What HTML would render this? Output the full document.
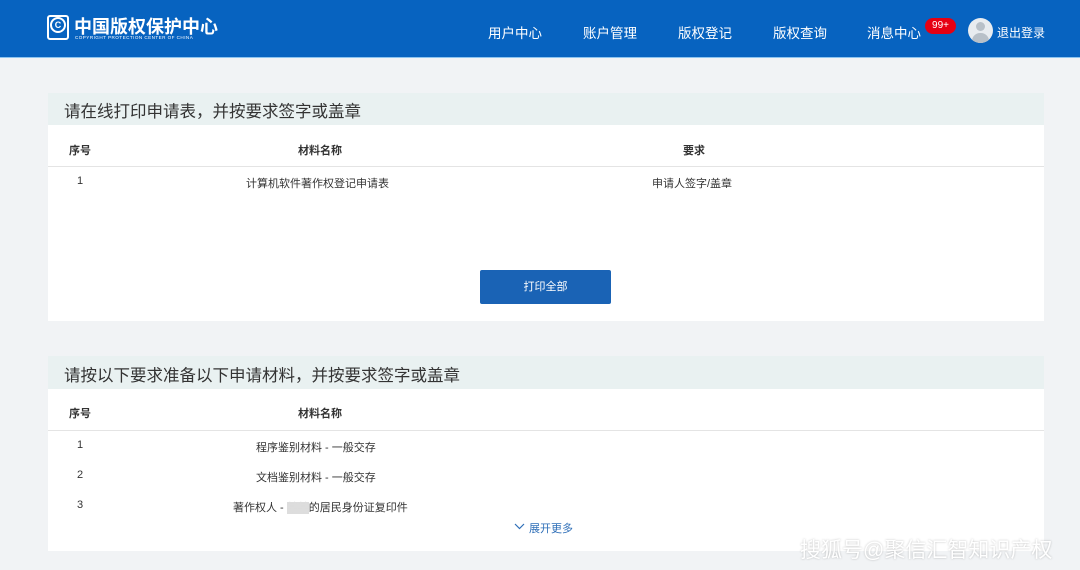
<!DOCTYPE html>
<html><head><meta charset="utf-8"><style>
*{margin:0;padding:0;box-sizing:border-box}
body{width:1080px;height:570px;overflow:hidden;background:#f1f3f5;font-family:"Liberation Sans","Noto Sans CJK SC",sans-serif;color:#333;position:relative}
.hdr{position:absolute;left:0;top:0;width:1080px;height:58px;background:#0763c0;border-bottom:1px solid #8cc4f0}
.abs{position:absolute;white-space:nowrap}
.nav{color:#fff;font-size:13.5px;top:22px}
.card{position:absolute;left:48px;width:996px;background:#fff}
.ttl{position:absolute;left:0;top:0;width:100%;height:32px;background:#e9f1f1;font-size:16.5px;color:#333;padding:5px 0 0 16px}
.t{font-size:11px;color:#333}
.b{font-weight:bold}
.line{position:absolute;left:0;width:100%;height:1px;background:#e4e4e4}
</style></head><body>
<div class="hdr">
 <div class="abs" style="left:47px;top:15px;width:22px;height:25px;border:2px solid #fff;border-radius:3px"></div>
 <div class="abs" style="left:50px;top:17px;width:16px;height:16px;border:2px solid #fff;border-radius:50%;color:#fff;font-size:9px;font-weight:bold;text-align:center;line-height:12px">C</div>
 <div class="abs" style="left:74px;top:13px;color:#fff;font-size:18px;font-weight:bold;letter-spacing:0">中国版权保护中心</div>
 <div class="abs" style="left:75px;top:35px;color:#fff;font-size:4.6px;letter-spacing:.45px">COPYRIGHT PROTECTION CENTER OF CHINA</div>
 <div class="abs nav" style="left:488px">用户中心</div>
 <div class="abs nav" style="left:583px">账户管理</div>
 <div class="abs nav" style="left:678px">版权登记</div>
 <div class="abs nav" style="left:773px">版权查询</div>
 <div class="abs nav" style="left:867px">消息中心</div>
 <div class="abs" style="left:925px;top:18px;width:31px;height:16px;background:#e60012;border-radius:8px;color:#fff;font-size:10px;text-align:center;line-height:16px">99+</div>
 <div class="abs" style="left:968px;top:18px;width:25px;height:25px;border-radius:50%;background:#e8ecf0;overflow:hidden">
  <div style="position:absolute;left:8px;top:4px;width:9px;height:9px;border-radius:50%;background:#b8c0c8"></div>
  <div style="position:absolute;left:4px;top:15px;width:17px;height:12px;border-radius:8px 8px 0 0;background:#b8c0c8"></div>
 </div>
 <div class="abs" style="left:997px;top:24px;color:#fff;font-size:12px">退出登录</div>
</div>

<div class="card" style="top:93px;height:228px">
 <div class="ttl">请在线打印申请表，并按要求签字或盖章</div>
 <div class="abs t b" style="left:21px;top:49px">序号</div>
 <div class="abs t b" style="left:250px;top:49px">材料名称</div>
 <div class="abs t b" style="left:635px;top:49px">要求</div>
 <div class="line" style="top:73px"></div>
 <div class="abs t" style="left:29px;top:82px">1</div>
 <div class="abs t" style="left:198px;top:82px">计算机软件著作权登记申请表</div>
 <div class="abs t" style="left:604px;top:82px">申请人签字/盖章</div>
 <div class="abs" style="left:432px;top:177px;width:131px;height:34px;background:#1a63b5;border-radius:2px;color:#fff;font-size:11px;text-align:center;line-height:34px">打印全部</div>
</div>

<div class="card" style="top:356px;height:195px">
 <div class="ttl" style="height:33px;padding-top:6px">请按以下要求准备以下申请材料，并按要求签字或盖章</div>
 <div class="abs t b" style="left:21px;top:49px">序号</div>
 <div class="abs t b" style="left:250px;top:49px">材料名称</div>
 <div class="line" style="top:74px"></div>
 <div class="abs t" style="left:29px;top:83px">1</div>
 <div class="abs t" style="left:208px;top:83px">程序鉴别材料 - 一般交存</div>
 <div class="abs t" style="left:29px;top:113px">2</div>
 <div class="abs t" style="left:208px;top:113px">文档鉴别材料 - 一般交存</div>
 <div class="abs t" style="left:29px;top:143px">3</div>
 <div class="abs t" style="left:185px;top:143px">著作权人 - <span style="background:#ddd;color:#ddd">某某</span>的居民身份证复印件</div>
 <svg class="abs" style="left:466px;top:167px" width="11" height="7"><path d="M1 1 L5.5 5.5 L10 1" stroke="#2f6fb8" stroke-width="1.2" fill="none"/></svg>
 <div class="abs" style="left:481px;top:164px;font-size:11px;color:#2f6fb8">展开更多</div>
</div>
<div class="abs" style="left:800px;top:534px;color:#fff;font-size:21px;text-shadow:0 0 2px rgba(0,0,0,.25)">搜狐号@聚信汇智知识产权</div>
</body></html>
